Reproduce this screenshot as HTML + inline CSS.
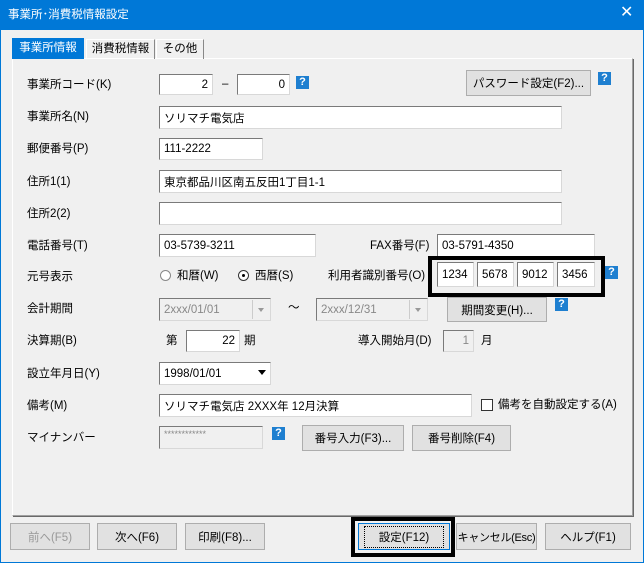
<!DOCTYPE html>
<html><head><meta charset="utf-8"><style>
*{box-sizing:border-box;margin:0;padding:0}
html,body{width:644px;height:563px;overflow:hidden}
body{background:#f0f0f0;font-family:"Liberation Sans","Noto Sans CJK JP",sans-serif;font-size:11.5px;color:#000;position:relative}
.a{position:absolute;white-space:nowrap}
.t{position:absolute;white-space:nowrap;line-height:14px}
.in{position:absolute;background:#fff;border:1px solid #7a7a7a;border-right-color:#d8d8d8;border-bottom-color:#d8d8d8;padding:0 4px;display:flex;align-items:center;white-space:nowrap;overflow:hidden}
.dis{background:#f0f0f0;color:#888}
.r{justify-content:flex-end}
.btn{position:absolute;background:#e1e1e1;border:1px solid #adadad;text-align:center;white-space:nowrap;display:flex;align-items:center;justify-content:center}
.q{position:absolute;width:13px;height:13px;background:#1e7fd0;color:#fff;font-weight:bold;font-size:11px;line-height:13px;text-align:center}
.cb{position:absolute;width:17px;border-left:1px solid #ccc;top:1px;bottom:1px;right:1px;background:#f0f0f0}
.cb:after{content:"";position:absolute;left:5px;top:8px;border:3px solid transparent;border-top:4px solid #999}
</style></head><body>
<div class="a" style="left:0;top:0;width:644px;height:30px;background:#0078d7"></div>
<div class="t" style="left:8px;top:8px;color:#fff">事業所･消費税情報設定</div>
<div class="t" style="left:620px;top:6px;color:#fff;font-size:16px">✕</div>
<div class="a" style="left:0;top:30px;width:1px;height:533px;background:#0078d7"></div>
<div class="a" style="left:643px;top:30px;width:1px;height:533px;background:#0078d7"></div>
<div class="a" style="left:0;top:562px;width:644px;height:1px;background:#0078d7"></div>

<div class="a" style="left:12px;top:58px;width:621px;height:458px;border:1px solid #fff;border-right-color:#a0a0a0;border-bottom-color:#a0a0a0;box-shadow:1px 1px 0 #696969"></div>
<div class="a" style="left:12px;top:38px;width:72px;height:21px;background:#0078d7;color:#fff;text-align:center;line-height:21px">事業所情報</div>
<div class="a" style="left:86px;top:39px;width:69px;height:20px;border:1px solid #fff;border-bottom:none;border-right-color:#888;text-align:center;line-height:19px">消費税情報</div>
<div class="a" style="left:156px;top:39px;width:48px;height:20px;border:1px solid #fff;border-bottom:none;border-right-color:#888;text-align:center;line-height:19px">その他</div>

<div class="t" style="left:27px;top:78px">事業所コード(K)</div>
<div class="in r" style="left:159px;top:74px;width:54px;height:21px">2</div>
<div class="t" style="left:222px;top:77px">–</div>
<div class="in r" style="left:237px;top:74px;width:53px;height:21px">0</div>
<div class="q" style="left:296px;top:76px">?</div>
<div class="btn" style="left:466px;top:70px;width:125px;height:26px">パスワード設定(F2)...</div>
<div class="q" style="left:598px;top:72px">?</div>

<div class="t" style="left:27px;top:110px">事業所名(N)</div>
<div class="in" style="left:159px;top:106px;width:403px;height:23px">ソリマチ電気店</div>
<div class="t" style="left:27px;top:142px">郵便番号(P)</div>
<div class="in" style="left:159px;top:138px;width:104px;height:22px">111-2222</div>
<div class="t" style="left:27px;top:175px">住所1(1)</div>
<div class="in" style="left:159px;top:170px;width:403px;height:23px">東京都品川区南五反田1丁目1-1</div>
<div class="t" style="left:27px;top:207px">住所2(2)</div>
<div class="in" style="left:159px;top:202px;width:403px;height:23px"></div>
<div class="t" style="left:27px;top:239px">電話番号(T)</div>
<div class="in" style="left:159px;top:234px;width:157px;height:23px">03-5739-3211</div>
<div class="t" style="left:370px;top:239px">FAX番号(F)</div>
<div class="in" style="left:437px;top:234px;width:158px;height:23px">03-5791-4350</div>

<div class="t" style="left:27px;top:270px">元号表示</div>
<div class="a" style="left:160px;top:270px;width:11px;height:11px;border:1px solid #888;border-radius:50%;background:#fff"></div>
<div class="t" style="left:177px;top:269px">和暦(W)</div>
<div class="a" style="left:238px;top:270px;width:11px;height:11px;border:1px solid #333;border-radius:50%;background:#fff"></div>
<div class="a" style="left:242px;top:274px;width:3px;height:3px;border-radius:50%;background:#000"></div>
<div class="t" style="left:255px;top:269px">西暦(S)</div>
<div class="t" style="left:328px;top:269px">利用者識別番号(O)</div>
<div class="a" style="left:428px;top:256px;width:177px;height:41px;border:4px solid #000"></div>
<div class="in" style="left:437px;top:262px;width:37px;height:25px">1234</div>
<div class="in" style="left:477px;top:262px;width:37px;height:25px">5678</div>
<div class="in" style="left:517px;top:262px;width:37px;height:25px">9012</div>
<div class="in" style="left:557px;top:262px;width:38px;height:25px">3456</div>
<div class="q" style="left:605px;top:266px">?</div>

<div class="t" style="left:27px;top:302px">会計期間</div>
<div class="in dis" style="left:159px;top:298px;width:112px;height:23px">2xxx/01/01<div class="cb"></div></div>
<div class="t" style="left:288px;top:301px">～</div>
<div class="in dis" style="left:316px;top:298px;width:112px;height:23px">2xxx/12/31<div class="cb"></div></div>
<div class="btn" style="left:447px;top:297px;width:100px;height:25px">期間変更(H)...</div>
<div class="q" style="left:555px;top:298px">?</div>

<div class="t" style="left:27px;top:334px">決算期(B)</div>
<div class="t" style="left:166px;top:334px">第</div>
<div class="in r" style="left:186px;top:330px;width:54px;height:22px">22</div>
<div class="t" style="left:244px;top:334px">期</div>
<div class="t" style="left:358px;top:334px">導入開始月(D)</div>
<div class="in r dis" style="left:443px;top:330px;width:31px;height:22px">1</div>
<div class="t" style="left:481px;top:334px">月</div>

<div class="t" style="left:27px;top:367px">設立年月日(Y)</div>
<div class="in" style="left:159px;top:362px;width:112px;height:23px">1998/01/01</div>
<div class="a" style="left:258px;top:370px;border:4px solid transparent;border-top:5px solid #000"></div>

<div class="t" style="left:27px;top:399px">備考(M)</div>
<div class="in" style="left:159px;top:394px;width:313px;height:23px">ソリマチ電気店 2XXX年 12月決算</div>
<div class="a" style="left:481px;top:399px;width:12px;height:12px;border:1px solid #333;background:#fff"></div>
<div class="t" style="left:498px;top:398px">備考を自動設定する(A)</div>

<div class="t" style="left:27px;top:431px">マイナンバー</div>
<div class="in dis" style="left:159px;top:426px;width:104px;height:23px;font-size:9px;align-items:flex-start;padding-top:2px">************</div>
<div class="q" style="left:272px;top:427px">?</div>
<div class="btn" style="left:302px;top:425px;width:102px;height:26px">番号入力(F3)...</div>
<div class="btn" style="left:412px;top:425px;width:99px;height:26px">番号削除(F4)</div>

<div class="btn" style="left:10px;top:523px;width:80px;height:27px;color:#999">前へ(F5)</div>
<div class="btn" style="left:97px;top:523px;width:80px;height:27px">次へ(F6)</div>
<div class="btn" style="left:185px;top:523px;width:80px;height:27px">印刷(F8)...</div>
<div class="a" style="left:351px;top:517px;width:104px;height:40px;border:4px solid #000"></div>
<div class="btn" style="left:358px;top:523px;width:92px;height:27px;border-color:#0078d7"><span style="outline:1px dotted #000;padding:2px 14px">設定(F12)</span></div>
<div class="btn" style="left:456px;top:523px;width:81px;height:27px;font-size:11px;letter-spacing:-0.3px">キャンセル(Esc)</div>
<div class="btn" style="left:545px;top:523px;width:86px;height:27px">ヘルプ(F1)</div>
</body></html>
